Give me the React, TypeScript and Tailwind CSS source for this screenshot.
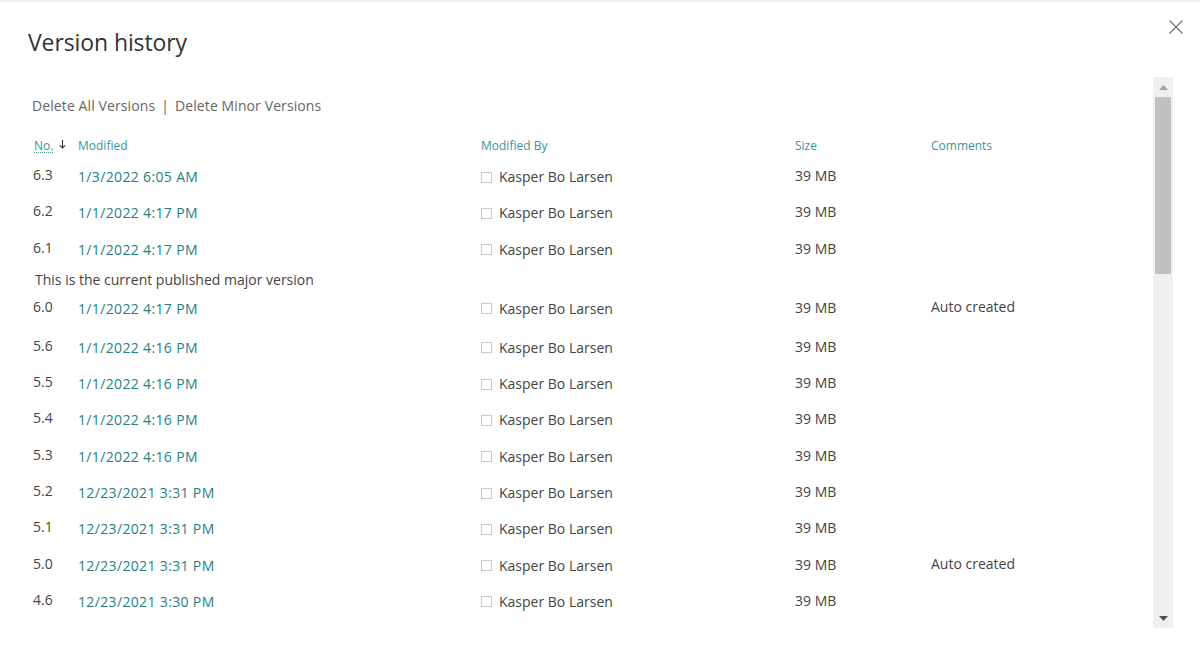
import React from "react";

interface Version {
  no: string;
  modified: string;
  by: string;
  size: string;
  comment?: string;
  note?: string;
}

const versions: Version[] = [
  { no: "6.3", modified: "1/3/2022 6:05 AM", by: "Kasper Bo Larsen", size: "39 MB" },
  { no: "6.2", modified: "1/1/2022 4:17 PM", by: "Kasper Bo Larsen", size: "39 MB" },
  { no: "6.1", modified: "1/1/2022 4:17 PM", by: "Kasper Bo Larsen", size: "39 MB" },
  {
    no: "6.0",
    modified: "1/1/2022 4:17 PM",
    by: "Kasper Bo Larsen",
    size: "39 MB",
    comment: "Auto created",
    note: "This is the current published major version",
  },
  { no: "5.6", modified: "1/1/2022 4:16 PM", by: "Kasper Bo Larsen", size: "39 MB" },
  { no: "5.5", modified: "1/1/2022 4:16 PM", by: "Kasper Bo Larsen", size: "39 MB" },
  { no: "5.4", modified: "1/1/2022 4:16 PM", by: "Kasper Bo Larsen", size: "39 MB" },
  { no: "5.3", modified: "1/1/2022 4:16 PM", by: "Kasper Bo Larsen", size: "39 MB" },
  { no: "5.2", modified: "12/23/2021 3:31 PM", by: "Kasper Bo Larsen", size: "39 MB" },
  { no: "5.1", modified: "12/23/2021 3:31 PM", by: "Kasper Bo Larsen", size: "39 MB" },
  { no: "5.0", modified: "12/23/2021 3:31 PM", by: "Kasper Bo Larsen", size: "39 MB", comment: "Auto created" },
  { no: "4.6", modified: "12/23/2021 3:30 PM", by: "Kasper Bo Larsen", size: "39 MB" },
];

const cols = "grid grid-cols-[45px_403px_314px_136px_1fr]";

function VersionRow({ v }: { v: Version }) {
  return (
    <>
      {v.note && (
        <div className="h-[23px] flex items-center text-[14px] text-[#444] pl-[2px]">{v.note}</div>
      )}
      <div
        className={`${cols} ${v.note ? "h-[39px]" : "h-[36.3px]"} items-start pt-[8px] text-[14px] leading-[20px]`}
      >
        <div className="text-[#444] -translate-y-[2px]">{v.no}</div>
        <div className="text-[#1f7f84] tracking-[0.35px]">{v.modified}</div>
        <div className="flex items-center text-[#444]">
          <span className="w-[11px] h-[11px] border border-[#c8c8c8] mr-[7px]"></span>
          {v.by}
        </div>
        <div className="text-[#444] -translate-y-[1px]">{v.size}</div>
        <div className="text-[#444] -translate-y-[2px]">{v.comment}</div>
      </div>
    </>
  );
}

function Scrollbar() {
  return (
    <div className="w-[20px] shrink-0 bg-[#f0f0f0] flex flex-col items-center">
      <div className="h-[20px] flex items-center justify-center">
        <svg width="9" height="5" viewBox="0 0 9 5">
          <path d="M0 5 L4.5 0 L9 5 Z" fill="#a3a3a3" />
        </svg>
      </div>
      <div className="w-[16px] h-[177px] bg-[#c1c1c1]"></div>
      <div className="flex-1"></div>
      <div className="h-[20px] flex items-center justify-center">
        <svg width="9" height="5" viewBox="0 0 9 5">
          <path d="M0 0 L9 0 L4.5 5 Z" fill="#505050" />
        </svg>
      </div>
    </div>
  );
}

export default function App() {
  return (
    <div
      className="w-[1200px] h-[658px] bg-white border-t-2 border-[#ececec] overflow-hidden flex flex-col"
      style={{ fontFamily: '"Open Sans", "Noto Sans", sans-serif' }}
    >
      <div className="h-[75px] flex items-start justify-between pl-[28px] pr-[16px]">
        <h1 className="text-[23px] leading-[30px] text-[#333] mt-[25px] tracking-[-0.1px]">Version history</h1>
        <button className="mt-[17px] w-[16px] h-[16px] flex items-center justify-center">
          <svg width="14" height="14" viewBox="0 0 14 14">
            <path d="M0.5 0.5 L13.5 13.5 M13.5 0.5 L0.5 13.5" stroke="#6b6b6b" strokeWidth="1.1" />
          </svg>
        </button>
      </div>

      <div className="flex h-[551px] ml-[28px] mr-[27px]">
        <div className="flex-1 pl-[5px] pt-[17px] overflow-hidden">
          <div className="h-[22px] flex items-center text-[14px] text-[#666] -ml-[1px] tracking-[0.1px]">
            <span>Delete All Versions</span>
            <span className="mx-[6px]">|</span>
            <span>Delete Minor Versions</span>
          </div>
          <div className={`${cols} mt-[21px] h-[16px] items-center text-[12px] text-[#3a9597]`}>
            <div className="flex items-center">
              <span className="underline decoration-dotted underline-offset-2 pl-[1px]">No.</span>
              <svg width="7" height="9" viewBox="0 0 7 9" className="ml-[6px] -mt-[3px]">
                <path d="M3.5 0 V8 M0.8 5.3 L3.5 8 L6.2 5.3" stroke="#333" strokeWidth="1.1" fill="none" />
              </svg>
            </div>
            <div>Modified</div>
            <div>Modified By</div>
            <div>Size</div>
            <div>Comments</div>
          </div>
          <div className="mt-[6px]">
            {versions.map((v) => (
              <VersionRow key={v.no} v={v} />
            ))}
          </div>
        </div>
        <Scrollbar />
      </div>
    </div>
  );
}
